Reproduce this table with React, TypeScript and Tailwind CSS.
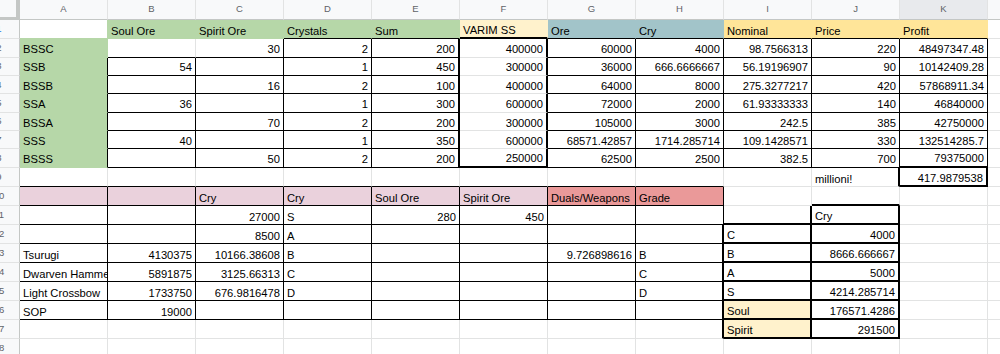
import React from 'react';

type Bg = 'g' | 'ly' | 't' | 'y' | 'p' | 'r';
type Cell = { v?: string; right?: boolean; bg?: Bg };

const bgCls: Record<Bg, string> = {
  g: 'bg-[#b6d7a8]',
  ly: 'bg-[#fff2cc]',
  t: 'bg-[#a2c4c9]',
  y: 'bg-[#ffe599]',
  p: 'bg-[#ead1dc]',
  r: 'bg-[#ea9999]',
};

// gridline colour taken from a filled cell so the fill hides the line
const fillR: Record<Bg, string> = {
  g: 'border-r-[#b6d7a8]',
  ly: 'border-r-[#fff2cc]',
  t: 'border-r-[#a2c4c9]',
  y: 'border-r-[#ffe599]',
  p: 'border-r-[#ead1dc]',
  r: 'border-r-[#ea9999]',
};
const fillB: Record<Bg, string> = {
  g: 'border-b-[#b6d7a8]',
  ly: 'border-b-[#fff2cc]',
  t: 'border-b-[#a2c4c9]',
  y: 'border-b-[#ffe599]',
  p: 'border-b-[#ead1dc]',
  r: 'border-b-[#ea9999]',
};

const COLS = ['A', 'B', 'C', 'D', 'E', 'F', 'G', 'H', 'I', 'J', 'K'];
const NROWS = 18;

const t = (v: string, bg?: Bg): Cell => ({ v, bg });
const n = (v: string, bg?: Bg): Cell => ({ v, right: true, bg });
const e = (bg?: Bg): Cell => ({ bg });

const upper: string[][] = [
  ['BSSC', '', '30', '2', '200', '400000', '60000', '4000', '98.7566313', '220', '48497347.48'],
  ['SSB', '54', '', '1', '450', '300000', '36000', '666.6666667', '56.19196907', '90', '10142409.28'],
  ['BSSB', '', '16', '2', '100', '400000', '64000', '8000', '275.3277217', '420', '57868911.34'],
  ['SSA', '36', '', '1', '300', '600000', '72000', '2000', '61.93333333', '140', '46840000'],
  ['BSSA', '', '70', '2', '200', '300000', '105000', '3000', '242.5', '385', '42750000'],
  ['SSS', '40', '', '1', '350', '600000', '68571.42857', '1714.285714', '109.1428571', '330', '132514285.7'],
  ['BSSS', '', '50', '2', '200', '250000', '62500', '2500', '382.5', '700', '79375000'],
];

const rows: Cell[][] = [
  [e(), t('Soul Ore', 'g'), t('Spirit Ore', 'g'), t('Crystals', 'g'), t('Sum', 'g'), t('VARIM SS', 'ly'), t('Ore', 't'), t('Cry', 't'), t('Nominal', 'y'), t('Price', 'y'), t('Profit', 'y')],
  ...upper.map((r) => [t(r[0], 'g'), ...r.slice(1).map((v) => n(v))]),
  [e(), e(), e(), e(), e(), e(), e(), e(), e(), t('millioni!'), n('417.9879538')],
  [e('p'), e('p'), t('Cry', 'p'), t('Cry', 'p'), t('Soul Ore', 'p'), t('Spirit Ore', 'p'), t('Duals/Weapons', 'r'), t('Grade', 'r'), e(), e(), e()],
  [e(), e(), n('27000'), t('S'), n('280'), n('450'), e(), e(), e(), t('Cry'), e()],
  [e(), e(), n('8500'), t('A'), e(), e(), e(), e(), t('C'), n('4000'), e()],
  [t('Tsurugi'), n('4130375'), n('10166.38608'), t('B'), e(), e(), n('9.726898616'), t('B'), t('B'), n('8666.666667'), e()],
  [t('Dwarven Hammer'), n('5891875'), n('3125.66313'), t('C'), e(), e(), e(), t('C'), t('A'), n('5000'), e()],
  [t('Light Crossbow'), n('1733750'), n('676.9816478'), t('D'), e(), e(), e(), t('D'), t('S'), n('4214.285714'), e()],
  [t('SOP'), n('19000'), e(), e(), e(), e(), e(), e(), t('Soul', 'ly'), n('176571.4286'), e()],
  [e(), e(), e(), e(), e(), e(), e(), e(), t('Spirit', 'ly'), n('291500'), e()],
  [e(), e(), e(), e(), e(), e(), e(), e(), e(), e(), e()],
];

// H[r][c]: line on top of row r, V[r][c]: line left of column c (rows 1-based)
const H: number[][] = Array.from({ length: NROWS + 2 }, () => Array(13).fill(0));
const V: number[][] = Array.from({ length: NROWS + 2 }, () => Array(13).fill(0));

function all(r1: number, c1: number, r2: number, c2: number, w: number) {
  for (let r = r1; r <= r2; r++)
    for (let c = c1; c <= c2; c++) {
      H[r][c] = Math.max(H[r][c], w);
      H[r + 1][c] = Math.max(H[r + 1][c], w);
      V[r][c] = Math.max(V[r][c], w);
      V[r][c + 1] = Math.max(V[r][c + 1], w);
    }
}
function outline(r1: number, c1: number, r2: number, c2: number, w: number) {
  for (let c = c1; c <= c2; c++) {
    H[r1][c] = Math.max(H[r1][c], w);
    H[r2 + 1][c] = Math.max(H[r2 + 1][c], w);
  }
  for (let r = r1; r <= r2; r++) {
    V[r][c1] = Math.max(V[r][c1], w);
    V[r][c2 + 1] = Math.max(V[r][c2 + 1], w);
  }
}

all(3, 1, 8, 4, 1);
all(2, 3, 2, 4, 1);
all(2, 6, 8, 10, 1);
outline(2, 5, 8, 5, 2);
outline(9, 10, 9, 10, 2);
all(10, 0, 16, 7, 1);
all(11, 9, 17, 9, 2);
all(12, 8, 17, 8, 2);

function cellCls(r: number, c: number) {
  const cell = rows[r - 1][c];
  const rightN = c < 10 ? rows[r - 1][c + 1] : undefined;
  const below = r < NROWS ? rows[r][c] : undefined;
  const cls: string[] = [];
  const vr = V[r][c + 1];
  if (vr === 2) cls.push('border-r-2 border-r-black');
  else if (vr === 1) cls.push('border-r border-r-black');
  else {
    const f = cell.bg ?? rightN?.bg;
    cls.push('border-r', f ? fillR[f] : 'border-r-[#e2e3e3]');
  }
  const hb = H[r + 1][c];
  if (hb === 2) cls.push('border-b-2 border-b-black');
  else if (hb === 1) cls.push('border-b border-b-black');
  else {
    const f = cell.bg ?? below?.bg;
    cls.push('border-b', f ? fillB[f] : 'border-b-[#e2e3e3]');
  }
  if (cell.bg) cls.push(bgCls[cell.bg]);
  else cls.push('bg-white');
  cls.push(cell.right ? 'justify-end' : 'justify-start');
  return cls.join(' ');
}

export default function App() {
  return (
    <div className="w-[1000px] h-[354px] overflow-hidden bg-white font-['Liberation_Sans',Arial,sans-serif] text-black">
      <div className="grid grid-cols-[20px_repeat(11,88px)_1fr] grid-rows-[20px_19.3px_repeat(7,18.35px)_19.6px_repeat(9,19px)]">
        {/* corner */}
        <div className="bg-[#f8f9fa] border-r-4 border-b-[3px] border-[#c4c7c5]" />
        {COLS.map((c) => (
          <div
            key={c}
            className={`flex items-center justify-center border-r border-r-[#e2e3e3] border-b border-b-[#c4c7c5] text-[9.5px] text-[#5f6368] ${c === 'K' ? 'bg-[#e8eaed]' : 'bg-[#f8f9fa]'}`}
          >
            {c}
          </div>
        ))}
        <div className="bg-[#f8f9fa] border-b border-b-[#c4c7c5]" />

        {rows.map((row, i) => {
          const r = i + 1;
          return (
            <React.Fragment key={r}>
              <div className="relative overflow-hidden bg-[#f8f9fa] border-r border-r-[#c4c7c5] border-b border-b-[#e2e3e3]">
                <div className={`absolute inset-y-0 left-[-21px] w-[40px] flex items-center justify-center text-[9.5px] ${r === 1 ? 'text-[#1a73e8]' : 'text-[#5f6368]'}`}>
                  {r}
                </div>
              </div>
              {row.map((cell, c) => (
                <div
                  key={c}
                  className={`flex items-end overflow-hidden whitespace-nowrap px-[3px] pb-[0.5px] text-[11.2px] leading-[13px] ${cellCls(r, c)}`}
                >
                  {cell.v}
                </div>
              ))}
              <div className="bg-white border-b border-b-[#e2e3e3]" />
            </React.Fragment>
          );
        })}
      </div>
    </div>
  );
}
